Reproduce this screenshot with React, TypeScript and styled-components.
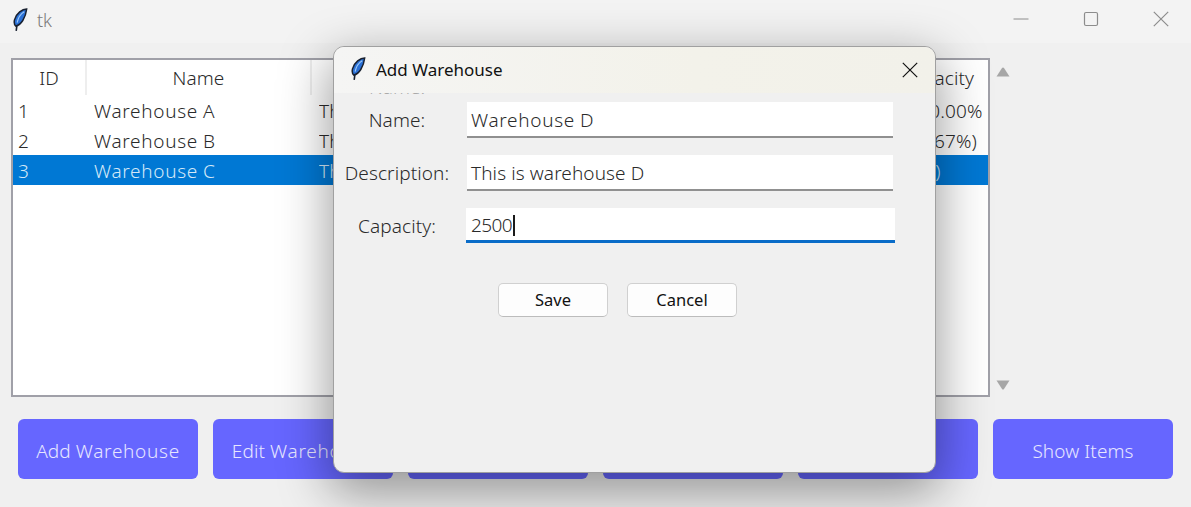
import React from "react";
import styled, { createGlobalStyle } from "styled-components";

const Global = createGlobalStyle`
  html, body { margin: 0; padding: 0; background: #f0f0f0; }
  body { font-family: "Noto Sans", "Open Sans", sans-serif; }
`;

const Page = styled.div`
  width: 1191px;
  height: 507px;
  position: relative;
  overflow: hidden;
  background: #f0f0f0;
`;

const WindowBar = styled.header`
  height: 43px;
  background: #f3f3f3;
  display: flex;
  align-items: center;
  padding-left: 13px;
  gap: 9px;
`;

const WindowTitle = styled.span`
  font-size: 18px;
  font-weight: 300;
  color: #7a7a7a;
  flex: 1;
  margin-top: -4px;
`;

const Controls = styled.div`
  display: flex;
  align-items: center;
  margin: -5px -5px 0 0;
`;

const ControlBtn = styled.div`
  width: 70px;
  display: flex;
  justify-content: center;
  color: #8c8c8c;
`;

const Main = styled.main`
  padding: 15px 18px 0 11px;
`;

const TableRow = styled.div`
  display: flex;
`;

const Table = styled.div`
  width: 979px;
  height: 339px;
  box-sizing: border-box;
  background: #fff;
  border: 2px solid #a0a0a8;
  overflow: hidden;
`;

const HeaderRow = styled.div`
  display: grid;
  grid-template-columns: 74px 225px 575px 1fr;
  height: 35px;
`;

const HeaderCell = styled.div`
  display: flex;
  align-items: center;
  justify-content: center;
  font-size: 19px;
  font-weight: 300;
  letter-spacing: 0.1px;
  color: #2a2a2a;
  border-right: 2px solid #eeeeee;
  box-sizing: border-box;
  &:last-child { border-right: 0; }
`;

const DataRow = styled.div<{ $selected?: boolean }>`
  display: grid;
  grid-template-columns: 76px 225px 578px 85px;
  height: 30px;
  box-sizing: border-box;
  padding: 2px 0 0 5px;
  align-items: center;
  font-size: 19px;
  font-weight: 300;
  letter-spacing: 0.1px;
  background: ${(p) => (p.$selected ? "#0078d4" : "transparent")};
  color: ${(p) => (p.$selected ? "#d4e8f8" : "#2a2a2a")};
`;

const Cell = styled.span`
  white-space: nowrap;
  overflow: hidden;
`;

const Wide = styled.span`
  letter-spacing: 0.7px;
`;

const ScrollTrack = styled.div`
  width: 25px;
  height: 339px;
  box-sizing: border-box;
  display: flex;
  flex-direction: column;
  justify-content: space-between;
  align-items: center;
  padding: 9px 0 7px;
`;

const Buttons = styled.div`
  display: flex;
  gap: 15px;
  margin: 22px 0 0 7px;
`;

const ActionButton = styled.div`
  width: 180px;
  height: 60px;
  box-sizing: border-box;
  padding-top: 3px;
  border-radius: 6px;
  background: #6666ff;
  color: #e6e6ff;
  font-size: 19px;
  font-weight: 300;
  letter-spacing: 0.1px;
  display: flex;
  align-items: center;
  justify-content: center;
  white-space: pre;
  overflow: hidden;
`;

const Dialog = styled.section`
  position: absolute;
  left: 333px;
  top: 46px;
  width: 603px;
  height: 427px;
  box-sizing: border-box;
  background: #f0f0f0;
  border: 1px solid #a0a0a0;
  border-radius: 11px;
  box-shadow: 0 16px 50px 4px rgba(0, 0, 0, 0.38);
  overflow: hidden;
  display: flex;
  flex-direction: column;
`;

const DialogBar = styled.div`
  height: 46px;
  flex: none;
  position: relative;
  z-index: 1;
  background: linear-gradient(90deg, #f5f5f4, #f3f2ea 60%, #f2f1ea);
  display: flex;
  align-items: center;
  padding-left: 17px;
  gap: 10px;
`;

const DialogTitle = styled.span`
  font-size: 17px;
  color: #111;
  flex: 1;
  margin-top: -2px;
`;

const DialogClose = styled.div`
  width: 50px;
  display: flex;
  justify-content: center;
  color: #111;
`;

const DialogBody = styled.div`
  position: relative;
  padding: 9px 41px 0 0;
  flex: 1;
`;

const GhostLabel = styled.div`
  position: absolute;
  left: 32px;
  top: -19px;
  width: 62px;
  text-align: center;
  font-size: 19px;
  font-weight: 300;
  color: #aaa;
`;

const Form = styled.div`
  display: grid;
  grid-template-columns: 133px 426px;
  row-gap: 17px;
`;

const FieldLabel = styled.div`
  font-size: 19px;
  font-weight: 300;
  letter-spacing: 0.1px;
  color: #2a2a2a;
  display: flex;
  align-items: center;
  justify-content: center;
  padding-right: 7px;
`;

const Entry = styled.div<{ $focused?: boolean }>`
  height: ${(p) => (p.$focused ? "35px" : "36px")};
  box-sizing: border-box;
  background: #fff;
  border-bottom: ${(p) => (p.$focused ? "3px solid #0a6cc8" : "2px solid #909090")};
  ${(p) => (p.$focused ? "margin: 0 -2px 0 -1px; padding: 2px 0 0 5px; letter-spacing: -0.6px;" : "padding: 2px 0 0 4px; letter-spacing: 0.1px;")}
  font-size: 19px;
  font-weight: 300;
  color: #2a2a2a;
  display: flex;
  align-items: center;
  white-space: pre;
`;

const Caret = styled.span`
  width: 2px;
  height: 21px;
  margin-left: 1px;
  background: #1a1a1a;
`;

const DialogActions = styled.div`
  display: flex;
  gap: 19px;
  margin: 40px 0 0 164px;
`;

const DialogButton = styled.div`
  width: 110px;
  height: 34px;
  box-sizing: border-box;
  padding-bottom: 2px;
  background: #fdfdfd;
  border: 1px solid #d0d0d0;
  border-bottom-color: #bcbcbc;
  border-radius: 5px;
  font-size: 16.5px;
  font-weight: 400;
  color: #111;
  display: flex;
  align-items: center;
  justify-content: center;
`;

const FeatherSvg = styled.svg`
  flex: none;
  margin-top: -3px;
`;

const Feather = () => (
  <FeatherSvg width="15" height="24" viewBox="0 0 16 25" aria-hidden="true">
    <path d="M14.6 0.8 C10 0.8 3.6 5 1.6 12.4 C1 15 1.2 17.4 3 19 C8.6 17.6 13.4 10.6 14.6 0.8 Z" fill="#2a70d6" stroke="#18202f" strokeWidth="1.6" />
    <path d="M12 3.6 C8.6 5.6 5.4 10 4.4 15.4" fill="none" stroke="#9cc9f7" strokeWidth="1.2" />
    <path d="M4.2 18 L3.4 24.2" fill="none" stroke="#18202f" strokeWidth="1.7" />
  </FeatherSvg>
);

const Minimize = () => (
  <svg width="16" height="16" viewBox="0 0 16 16"><path d="M0.5 8h15" stroke="currentColor" strokeWidth="1" /></svg>
);
const Maximize = () => (
  <svg width="16" height="16" viewBox="0 0 16 16"><rect x="1.5" y="1.5" width="13" height="13" rx="1.5" fill="none" stroke="currentColor" strokeWidth="1.2" /></svg>
);
const CloseIcon = () => (
  <svg width="16" height="16" viewBox="0 0 16 16"><path d="M0.8 0.8 15.2 15.2M15.2 0.8 0.8 15.2" stroke="currentColor" strokeWidth="1.2" /></svg>
);

const rows = [
  { id: "1", letter: "A", desc: "This is warehouse A", cap: "5 (50.00%)" },
  { id: "2", letter: "B", desc: "This is warehouse B", cap: "2 (6.67%)" },
  { id: "3", letter: "C", desc: "This is warehouse C", cap: "(100)" },
];

const actions = [
  ["Add ", "Warehouse"],
  ["Edit ", "Warehouse"],
  ["Delete ", "Warehouse"],
  ["Add Item", ""],
  ["Edit Item", ""],
  ["Show Items", ""],
];

export default function App() {
  return (
    <Page>
      <Global />
      <WindowBar>
        <Feather />
        <WindowTitle>tk</WindowTitle>
        <Controls>
          <ControlBtn><Minimize /></ControlBtn>
          <ControlBtn><Maximize /></ControlBtn>
          <ControlBtn><CloseIcon /></ControlBtn>
        </Controls>
      </WindowBar>
      <Main>
        <TableRow>
          <Table>
            <HeaderRow>
              <HeaderCell>ID</HeaderCell>
              <HeaderCell>Name</HeaderCell>
              <HeaderCell>Description</HeaderCell>
              <HeaderCell>Capacity</HeaderCell>
            </HeaderRow>
            {rows.map((r, i) => (
              <DataRow key={r.id} $selected={i === 2}>
                <Cell>{r.id}</Cell>
                <Cell><Wide>Warehouse</Wide> {r.letter}</Cell>
                <Cell>{r.desc}</Cell>
                <Cell>{r.cap}</Cell>
              </DataRow>
            ))}
          </Table>
          <ScrollTrack>
            <svg width="14" height="10" viewBox="0 0 14 10"><path d="M7 0.5 Q7.6 0.5 8 1 L13.5 9.5 H0.5 L6 1 Q6.4 0.5 7 0.5Z" fill="#a6a6a6" /></svg>
            <svg width="14" height="10" viewBox="0 0 14 10"><path d="M7 9.5 Q7.6 9.5 8 9 L13.5 0.5 H0.5 L6 9 Q6.4 9.5 7 9.5Z" fill="#a6a6a6" /></svg>
          </ScrollTrack>
        </TableRow>
        <Buttons>
          {actions.map(([a, b]) => (
            <ActionButton key={a}>{a}{b && <Wide>{b}</Wide>}</ActionButton>
          ))}
        </Buttons>
      </Main>
      <Dialog>
        <DialogBar>
          <Feather />
          <DialogTitle>Add Warehouse</DialogTitle>
          <DialogClose><CloseIcon /></DialogClose>
        </DialogBar>
        <DialogBody>
          <GhostLabel>Name:</GhostLabel>
          <Form>
            <FieldLabel>Name:</FieldLabel>
            <Entry><Wide>Warehouse</Wide> D</Entry>
            <FieldLabel>Description:</FieldLabel>
            <Entry>This is warehouse D</Entry>
            <FieldLabel>Capacity:</FieldLabel>
            <Entry $focused>2500<Caret /></Entry>
          </Form>
          <DialogActions>
            <DialogButton>Save</DialogButton>
            <DialogButton>Cancel</DialogButton>
          </DialogActions>
        </DialogBody>
      </Dialog>
    </Page>
  );
}
